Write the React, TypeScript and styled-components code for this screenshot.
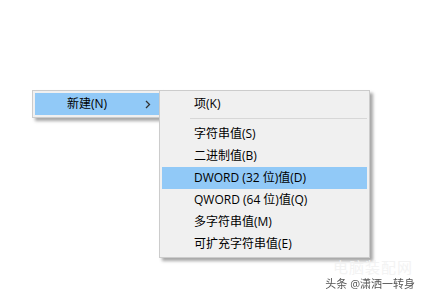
import React from 'react';
import styled, {createGlobalStyle} from 'styled-components';

const GlobalStyle = createGlobalStyle`
  html, body {
    margin: 0;
    padding: 0;
    background: #ffffff;
  }
  body {
    font-family: "Open Sans", "Noto Sans CJK SC", sans-serif;
  }
`;

const subItems = [
  {label: '字符串值(S)'},
  {label: '二进制值(B)'},
  {label: 'DWORD (32 位)值(D)', active: true},
  {label: 'QWORD (64 位)值(Q)'},
  {label: '多字符串值(M)'},
  {label: '可扩充字符串值(E)'},
];

const Arrow = () => (
  <svg width="6" height="9" viewBox="0 0 6 9">
    <polyline points="1,1 4.5,4.5 1,8" fill="none" stroke="#333" strokeWidth="1.3" />
  </svg>
);

export default function App() {
  return (
    <Page>
      <GlobalStyle />
      <Menu>
        <MenuItem $active>
          <Label>新建(N)</Label>
          <Arrow />
        </MenuItem>
        <SubMenu>
          <MenuItem>
            <Label>项(K)</Label>
          </MenuItem>
          <Separator />
          {subItems.map(item => (
            <MenuItem key={item.label} $active={item.active}>
              <Label>{item.label}</Label>
            </MenuItem>
          ))}
        </SubMenu>
      </Menu>
      <Watermark>
        <Faint>电脑装配网</Faint>
        <Credit>头条 @潇洒一转身</Credit>
      </Watermark>
    </Page>
  );
}

const Page = styled.div`
  position: relative;
  width: 425px;
  height: 301px;
  box-sizing: border-box;
  padding: 90px 0 0 32px;
  overflow: hidden;
`;

const Menu = styled.div`
  position: relative;
  width: 130px;
  box-sizing: border-box;
  padding: 2px;
  background: #f0f0f0;
  border: 1px solid #cccccc;
  box-shadow: 3px 3px 3px rgba(0, 0, 0, 0.35);
`;

const SubMenu = styled.div`
  position: absolute;
  left: 126px;
  top: -1px;
  width: 211px;
  box-sizing: border-box;
  padding: 2px;
  background: #f0f0f0;
  border: 1px solid #cccccc;
  box-shadow: 3px 3px 3px rgba(0, 0, 0, 0.35);
`;

const MenuItem = styled.div<{$active?: boolean}>`
  display: flex;
  align-items: center;
  justify-content: space-between;
  height: 22px;
  padding: 0 8px 0 32px;
  background: ${p => (p.$active ? '#91c9f7' : 'transparent')};
  color: #000;
`;

const Label = styled.span`
  font-size: 12px;
  line-height: 22px;
  white-space: nowrap;
`;

const Separator = styled.div`
  height: 1px;
  margin: 3px 0 4px 28px;
  background: #d7d7d7;
`;

const Watermark = styled.div`
  position: absolute;
  right: 10px;
  bottom: 10px;
  display: flex;
  flex-direction: column;
  align-items: flex-end;
`;

const Faint = styled.span`
  font-size: 15px;
  line-height: 16px;
  color: #f3f3f3;
  margin-right: 2px;
  letter-spacing: 1px;
`;

const Credit = styled.span`
  font-size: 11px;
  line-height: 14px;
  margin-top: 2px;
  color: #555;
  filter: blur(0.3px);
`;
